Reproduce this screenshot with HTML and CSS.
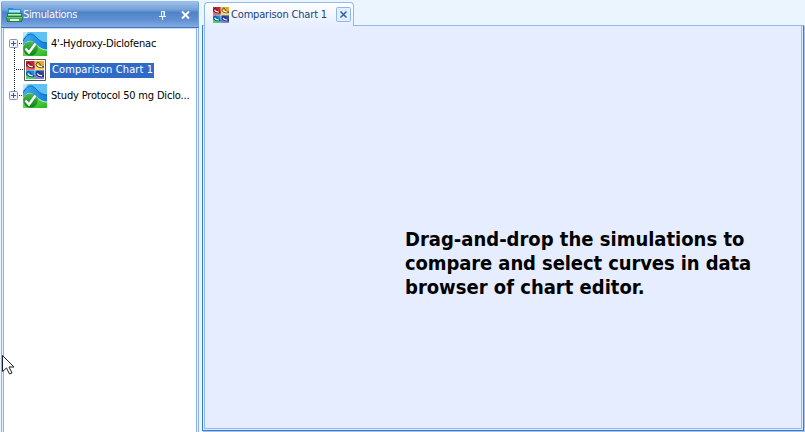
FILE: index.html
```html
<!DOCTYPE html>
<html lang="en">
<head>
<meta charset="utf-8">
<title>Simulations</title>
<link rel="stylesheet" href="styles.css">
</head>
<body>
<svg class="defs" width="0" height="0" aria-hidden="true">
  <defs>
    <linearGradient id="sky" x1="0" y1="0" x2="1" y2="0"><stop offset="0" stop-color="#49aef0"/><stop offset=".4" stop-color="#2a9bea"/><stop offset="1" stop-color="#1280dc"/></linearGradient>
    <linearGradient id="grass" x1="0" y1="0" x2="1" y2="1"><stop offset="0" stop-color="#9be87a"/><stop offset="1" stop-color="#22b51e"/></linearGradient>
    <linearGradient id="badge" x1="0" y1="0" x2="0" y2="1"><stop offset="0" stop-color="#51b957"/><stop offset="1" stop-color="#068410"/></linearGradient>
    <symbol id="simulation" viewBox="0 0 24 24">
      <path fill="#5fc0f6" d="M0 0h24v24H0z"/>
      <path fill="#bfe6fb" d="M0 0h5L0 7z"/>
      <path fill="url(#sky)" d="M0 9C3 4 5 2 8 2c5 0 7 9 16 9v8H0z"/>
      <path fill="none" stroke="#0b66bd" d="M0 9C3 4 5 2 8 2c5 0 7 9 16 9"/>
      <path fill="url(#grass)" d="M0 15C3 9 7 8 11 11s7 7 13 7v6H0z"/>
      <path fill="none" stroke="#d0f5c0" d="M0 15C3 9 7 8 11 11s7 7 13 7"/>
      <circle cx="7.500" cy="16.500" r="7.300" fill="url(#badge)"/>
      <path fill="none" stroke="#fff" stroke-width="2.400" d="M2.500 16.500 6 20.500 12.500 11.500"/>
    </symbol>
    <symbol id="comparison" viewBox="0 0 20 20">
      <path fill="#fff" d="M0 0h20v20H0z"/>
      <path fill="#c7292d" d="M0 0h9.600v9.600H0z"/>
      <path fill="#e3ad26" d="M10.400 0H20v9.600h-9.600z"/>
      <path fill="#198ee0" d="M0 10.400h9.600V20H0z"/>
      <path fill="#304ab5" d="M10.400 10.400H20V20h-9.600z"/>
      <path fill="#e46e68" d="M0 6q6 3 9.600 2v1.600H0z"/>
      <path fill="#ffdf62" d="M10.400 6q6 3 9.600 2v1.600h-9.600z"/>
      <path fill="#51d657" d="M0 16q6 3 9.600 2v2H0z"/>
      <path fill="#8480df" d="M10.400 16q6 3 9.600 2v2h-9.600z"/>
      <g fill="none" stroke="#1d1d2d" stroke-width=".8">
        <path d="M.5 4C2 .5 4 1 5 3.500S7.500 6 9.500 6.500M.5 4C2 7 5 8 9.500 6.500"/>
        <path d="M11 4c1.500-3.500 3.500-3 4.500-.5S18 6 20 6.500M11 4c1.500 3 4.500 4 9 2.500"/>
        <path d="M.5 14c1.500-3.500 3.500-3 4.500-.5S7.500 16 9.500 16.500M.5 14c1.500 3 4.500 4 9 2.500"/>
        <path d="M11 14c1.500-3.500 3.500-3 4.500-.5S18 16 20 16.500M11 14c1.500 3 4.500 4 9 2.500"/>
      </g>
      <path fill="none" stroke="#fff" stroke-width="1.300" d="M2 3.800C3 5.800 5 6.500 7.500 6.300M12.500 3.800c1 2 3 2.700 5.500 2.500M2 13.800c1 2 3 2.700 5.500 2.500M12.500 13.800c1 2 3 2.700 5.500 2.500"/>
    </symbol>
    <symbol id="expand" viewBox="0 0 9 9">
      <rect x=".5" y=".5" width="8" height="8" rx="1" fill="#eef2fb" stroke="#8293b6"/>
      <path stroke="#44557e" d="M2 4.500h5M4.500 2v5"/>
    </symbol>
  </defs>
</svg>
<div class="app">
  <aside class="panel">
    <header class="caption">
      <svg class="folder" width="17" height="16" viewBox="0 0 17 16">
        <path fill="#2390df" d="M2 7V1h5l1 1h7v5z"/><path fill="#a9e5fb" d="M3 3h11v2H3z"/><path fill="#5bc0f2" d="M3 5h11v1H3z"/>
        <path fill="#188344" d="M1 6h15v4h1l-1 5H1l-1-5h1z"/><path fill="#c2ebb7" d="M2 7h13v1H2z"/><path fill="#73c973" d="M2 8h13v1H2zM1 10h15v1H1z"/><path fill="#45a653" d="M1 11h15l-1 3H2z"/><path fill="#e5f5df" d="M4 12h9v2H4z"/>
      </svg>
      <span class="title">Simulations</span>
      <svg class="pin" width="8" height="9" viewBox="0 0 8 9"><path fill="none" stroke="#edf4ff" d="M2.500 5V.5h3V5M5 0v5M0 5.500h7M3.500 6v3"/></svg>
      <svg class="close" width="9" height="8" viewBox="0 0 9 8"><path stroke="#fff" stroke-width="2" d="m1 .5 7 7m0-7-7 7"/></svg>
    </header>
    <div class="tree">
      <div class="node"><svg class="branch" width="19" height="26"><path class="dots" d="M10.500 18v8M15 13.500h4"/><use href="#expand" x="5" y="9" width="9" height="9"/></svg><svg class="icon" width="24" height="24"><use href="#simulation"/></svg><span class="label l1">4'-Hydroxy-Diclofenac</span></div>
      <div class="node"><svg class="branch" width="19" height="26"><path class="dots" d="M10.500 0v26M12 13.500h7"/></svg><svg class="icon" width="24" height="24"><path fill="#fff" stroke="#555" d="M1.500 1.500h21v21h-21z"/><use href="#comparison" x="3" y="3" width="18" height="18"/></svg><span class="label selected">Comparison Chart 1</span></div>
      <div class="node"><svg class="branch" width="19" height="26"><path class="dots" d="M10.500 0v9M15 13.500h4"/><use href="#expand" x="5" y="9" width="9" height="9"/></svg><svg class="icon" width="24" height="24"><use href="#simulation"/></svg><span class="label l3">Study Protocol 50 mg Diclo...</span></div>
    </div>
  </aside>
  <main class="workspace">
    <div class="tab">
      <svg width="16" height="16"><use href="#comparison" width="16" height="16"/></svg>
      <span class="tabname">Comparison Chart 1</span>
      <svg class="tabclose" width="15" height="15" viewBox="0 0 15 15"><rect x=".5" y=".5" width="14" height="14" rx="1" fill="#e0efff" stroke="#8fb7e8"/><path stroke="#315f9f" stroke-width="1.500" d="m4.500 4.500 6 6m0-6-6 6"/></svg>
    </div>
    <section class="frame"><div class="canvas">
      <p class="hint"><span>Drag-and-drop the simulations to</span><span class="h2">compare and select curves in data</span><span>browser of chart editor.</span></p>
    </div></section>
  </main>
</div>
<svg class="cursor" width="13" height="21" viewBox="0 0 13 21"><path fill="#fff" stroke="#182033" d="M.5.5v16l4-3.500 3 6 2.500-1-3-6h5z"/></svg>
</body>
</html>
```
FILE: styles.css
```css
* { box-sizing: border-box; }
body { margin: 0; overflow: hidden; font: 11px/14px "DejaVu Sans Condensed", "DejaVu Sans", sans-serif; font-stretch: condensed; }
svg { display: block; flex: none; }
.defs { position: absolute; }
.app { display: flex; width: 805px; height: 432px; background: #eaf5fe; }
.panel { display: flex; flex-direction: column; width: 198px; margin: 1px 0 0 1px; flex: none; }
.caption { display: flex; align-items: center; height: 27px; padding: 1px 8px 0 4px; border: 1px solid #6f9fda; border-bottom-color: #4374b4; border-top-color: #93bbec; border-radius: 2px 2px 0 0; background: linear-gradient(#9dbfe8 0, #76a1da 30%, #4f83c8 42%, #6090d2 72%, #82ace3 100%); color: #fff; }
.folder { margin-top: -1px; }
.title { flex: 1; white-space: nowrap; letter-spacing: -.35px; }
.pin { margin-right: 14px; }
.tree { flex: 1; padding-top: 3px; border: solid #8db3e3; border-width: 0 1px; background: #fff; box-shadow: inset 1px 0 #e7f2ff, inset 2px 0 #8db3e3, inset -1px 0 #e7f2ff, inset -2px 0 #8db3e3, inset 0 1px #c7ddf7; }
.node { display: flex; align-items: center; height: 26px; padding-left: 2px; white-space: nowrap; }
.branch { margin-top: -2px; }
.dots { stroke: #222; stroke-dasharray: 1 1; }
.label { margin-left: 4px; color: #000; letter-spacing: -.17px; }
.selected { width: 104px; height: 15px; margin-left: 3px; padding-left: 2px; background: #316ac5; color: #fff; letter-spacing: .12px; }
.workspace { flex: 1; min-width: 0; padding: 2px 1px 0 3px; display: flex; flex-direction: column; }
.tab { display: flex; align-items: center; width: 150px; height: 24px; margin: 0 0 -1px 2px; padding: 0 2px 0 8px; border: 1px solid #93b9eb; border-bottom: 0; border-radius: 4px 4px 0 0; background: linear-gradient(#fff, #e6eeff); color: #173f80; z-index: 1; }
.tabname { flex: 1; margin-left: 2px; white-space: nowrap; letter-spacing: -.17px; }
.frame { height: 406px; padding: 0 1px 1px; border: 1px solid #3b7ac9; border-top-color: #93b9eb; background: #deefff; box-shadow: 1px 1px #a4c6ee; }
.canvas { height: 403px; border: 1px solid #93b9eb; border-top: 0; background: #e6edff; padding: 201px 0 0 200px; }
.hint { margin: 0; color: #000; font: bold 20px/24px "DejaVu Sans Condensed", "DejaVu Sans", sans-serif; font-stretch: condensed; white-space: nowrap; }
.hint span { display: block; }
.hint .h2 { letter-spacing: -.1px; }
.cursor { position: absolute; left: 2px; top: 355px; }
```
